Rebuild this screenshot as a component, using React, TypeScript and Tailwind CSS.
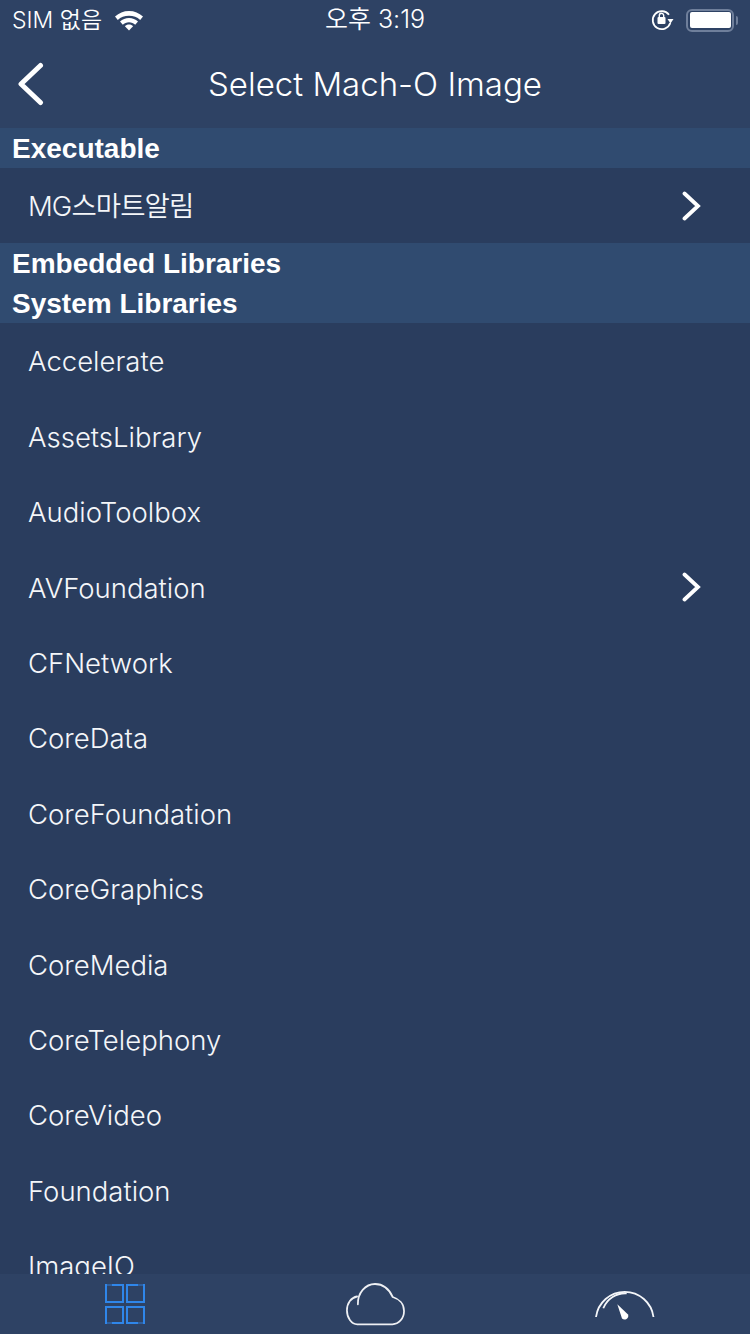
const libraries = [
  { name: "Accelerate" },
  { name: "AssetsLibrary" },
  { name: "AudioToolbox" },
  { name: "AVFoundation", more: true },
  { name: "CFNetwork" },
  { name: "CoreData" },
  { name: "CoreFoundation" },
  { name: "CoreGraphics" },
  { name: "CoreMedia" },
  { name: "CoreTelephony" },
  { name: "CoreVideo" },
  { name: "Foundation" },
  { name: "ImageIO" },
];

function Chevron() {
  return (
    <svg width="20" height="30" viewBox="0 0 20 30" fill="none">
      <path d="M2.500 2.500 L16 15 L2.500 27.500" stroke="white" strokeWidth="3.800" strokeLinecap="round" strokeLinejoin="miter" />
    </svg>
  );
}

function Row({ name, more, tight }: { name: string; more?: boolean; tight?: boolean }) {
  return (
    <div className="flex h-[75.4px] shrink-0 items-center justify-between pl-[28px] pr-[48px]">
      <span className={tight ? "mt-[2px] text-[27.500px] font-[350] tracking-[-0.9px] text-[#f4f6f9]" : "mt-[2px] text-[27.500px] font-[350] text-[#f4f6f9]"}>
        {name}
      </span>
      {more ? <Chevron /> : null}
    </div>
  );
}

function SectionHeader({ title }: { title: string }) {
  return (
    <div className="flex h-10 items-center bg-[#304b70] pl-3 pt-[2px] font-['Liberation_Sans',sans-serif] text-[28px] font-bold text-white">
      {title}
    </div>
  );
}

function StatusBar() {
  return (
    <div className="flex h-10 items-center justify-between px-3 text-white">
      <div className="flex w-[200px] items-center gap-3">
        <span className="text-[23px] font-[350]">SIM 없음</span>
        <svg width="30" height="22" viewBox="0 0 30 22" fill="white">
          <path d="M15 2C9.500 2 5 4 1 7.500L3.800 11C6.800 8 10.500 6.700 15 6.700S23.200 8 26.200 11L29 7.500C25 4 20.500 2 15 2z" />
          <path d="M15 9C11.500 9 8.500 10.200 6 12.500L8.800 15.800C10.400 14.200 12.500 13.300 15 13.300S19.600 14.200 21.200 15.800L24 12.500C21.500 10.200 18.500 9 15 9z" />
          <path d="M15 15.500C13.300 15.500 11.900 16.100 10.900 17.200L15 21.500L19.100 17.200C18.100 16.100 16.700 15.500 15 15.500z" />
        </svg>
      </div>
      <span className="text-[25px] font-[350]">오후 3:19</span>
      <div className="flex w-[200px] items-center justify-end gap-3">
        <svg width="24" height="24" viewBox="0 0 24 24" fill="none">
          <path d="M19 6.800A9 9 0 1 0 20.300 15" stroke="white" strokeWidth="1.800" />
          <path d="M17.500 11H23.500L20.500 15.500z" fill="white" />
          <rect x="7.500" y="9" width="8" height="7" rx="1" fill="white" />
          <path d="M9.300 9.500V7.500a2.200 2.200 0 0 1 4.400 0V9.500" stroke="white" strokeWidth="1.400" />
        </svg>
        <div className="flex items-center gap-[2px]">
          <div className="flex h-[23px] w-[48px] items-center rounded-[6px] border-[2.500px] border-[#6f7f9b] p-[1.500px]">
            <div className="h-full w-full rounded-[2px] bg-white" />
          </div>
          <div className="h-[9px] w-[2px] rounded-r-sm bg-[#6f7f9b]" />
        </div>
      </div>
    </div>
  );
}

function NavBar() {
  return (
    <div className="relative flex h-[88px] items-center justify-center">
      <svg className="absolute left-[17px] top-[22px]" width="27" height="44" viewBox="0 0 27 44" fill="none">
        <path d="M23.500 3.500 L4 22 L23.500 40.500" stroke="white" strokeWidth="5" strokeLinecap="round" strokeLinejoin="round" />
      </svg>
      <h1 className="mt-[2px] text-[33px] font-[350] text-white">Select Mach-O Image</h1>
    </div>
  );
}

function TabBar() {
  return (
    <div className="grid h-[60px] shrink-0 grid-cols-3 bg-[#2e4264]">
      <div className="flex items-start justify-center pt-[10px]">
        <svg width="40" height="40" viewBox="0 0 40 40" fill="none" strokeWidth="2">
          <g stroke="#2f5f9e">
            <path d="M1 1H7" />
            <path d="M33 1H39" />
            <path d="M1 39H7" />
            <path d="M33 39H39" />
          </g>
          <g stroke="#2f86ea">
            <path d="M1 0V18H18V1H7" />
            <path d="M33 1H22V18H39V0" />
            <path d="M1 40V23H18V39H7" />
            <path d="M33 39H22V23H39V40" />
          </g>
        </svg>
      </div>
      <div className="flex items-start justify-center pt-[9px]">
        <svg width="60" height="43" viewBox="0 0 62 43" preserveAspectRatio="none" fill="none" stroke="#eef0f4" strokeWidth="1.800" strokeLinecap="round">
          <path d="M13.300 21.300C13 10 21 1 31 1C40 1 46 7 49.300 14C56 16 61 21 61 28C61 35.500 55.500 41.300 49 41.300H12.700C6.500 41.300 2 34.500 2 27.500C2 20 6.500 14.500 12.500 13.500" />
        </svg>
      </div>
      <div className="flex items-start justify-center pt-[11px]">
        <svg width="60" height="36" viewBox="0 0 60 36" fill="none" stroke="#f4f6f9">
          <path d="M1 32A29 29 0 0 1 58.500 32" strokeWidth="1.800" />
          <path d="M8.300 23.300A23.500 23.500 0 0 1 31.700 8.300" strokeWidth="1.800" />
          <path d="M22.300 19.300L33 29.500A3.700 3.700 0 0 1 27 33.500z" fill="#ffffff" stroke="none" />
        </svg>
      </div>
    </div>
  );
}

export default function App() {
  return (
    <div className="flex h-[1334px] w-[750px] flex-col overflow-hidden bg-[#2a3d5e] font-['Inter','Noto_Sans_CJK_KR',sans-serif]">
      <div className="shrink-0 bg-[#2e4264]">
        <StatusBar />
        <NavBar />
      </div>

      <div className="min-h-0 flex-1 overflow-hidden">
        <SectionHeader title="Executable" />
        <Row name="MG스마트알림" more tight />
        <SectionHeader title="Embedded Libraries" />
        <SectionHeader title="System Libraries" />
        {libraries.map((lib) => (
          <Row key={lib.name} name={lib.name} more={lib.more} />
        ))}
      </div>

      <TabBar />
    </div>
  );
}
